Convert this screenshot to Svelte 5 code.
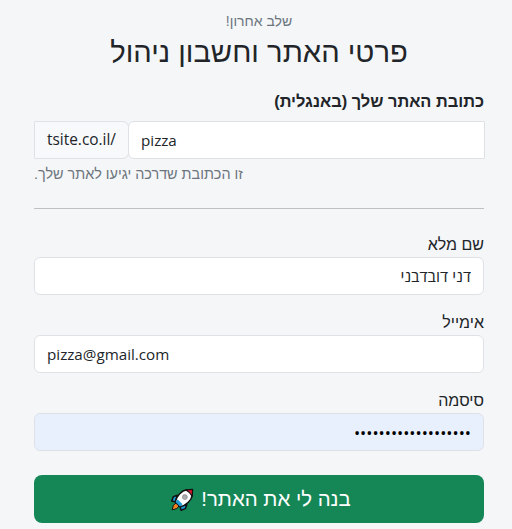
<script>
  var subtitle = "שלב אחרון!";
  var title = "פרטי האתר וחשבון ניהול";
  var address = "pizza";
  var fullName = "דני דובדבני";
  var email = "pizza@gmail.com";
  var password = "1234567890123456789";
</script>

<div class="page">
  <header class="head">
    <small>{subtitle}</small>
    <h1>{title}</h1>
  </header>

  <form onsubmit={e => e.preventDefault()}>
    <label class="strong" for="address">כתובת האתר שלך (באנגלית)</label>
    <div class="group" dir="ltr">
      <span class="addon">tsite.co.il/</span>
      <input id="address" class="control" type="text" value={address} />
    </div>
    <p class="help">זו הכתובת שדרכה יגיעו לאתר שלך.</p>

    <hr />

    <div class="field">
      <label for="name">שם מלא</label>
      <input id="name" class="control hebrew" type="text" value={fullName} />
    </div>
    <div class="field">
      <label for="email">אימייל</label>
      <input id="email" class="control" dir="ltr" type="email" value={email} />
    </div>
    <div class="field">
      <label for="password">סיסמה</label>
      <input id="password" class="control filled" type="password" value={password} />
    </div>

    <button type="submit">
      <span>בנה לי את האתר!</span>
      <svg class="rocket" viewBox="0 0 24 24" width="23" height="23" aria-hidden="true">
        <path d="M5.5 15.5 L2.5 18 L1.2 22.8 L6 21.5 L8.5 18.5 Z" fill="#f58220" stroke="#111" stroke-width="1" />
        <path d="M6.5 7.5 L2.5 9 L.8 13.5 L5 14.5 Z" fill="#1d9bd8" stroke="#111" stroke-width="1.6" stroke-linejoin="round" />
        <path d="M16.5 17.5 L15 21.5 L10.5 23.2 L9.5 19 Z" fill="#1d9bd8" stroke="#111" stroke-width="1.6" stroke-linejoin="round" />
        <path d="M4.5 14.5 C5.5 8.5 11 2.5 16.5 1.8 L22.2 1.8 L22.2 7.5 C21.5 13 15.5 18.5 9.5 19.5 Z" fill="#fff" stroke="#111" stroke-width="1.6" stroke-linejoin="round" />
        <path d="M15.5 2 L22.6 1.4 L22 8.5 C20.5 5.5 18.5 3.5 15.5 2 Z" fill="#e2142d" stroke="#111" stroke-width="1.2" stroke-linejoin="round" />
        <path d="M7 12 L12 17 L9.5 19.3 L4.7 14.5 Z" fill="#1d9bd8" />
        <circle cx="14.5" cy="9.5" r="2.6" fill="#a9adb0" stroke="#777" stroke-width=".6" />
      </svg>
    </button>
  </form>
</div>

<style>
  :global(body) {
    background: #f5f6f8;
    color: #212529;
    font-family: "Liberation Sans", Arial, sans-serif;
    font-size: 16px;
    line-height: 1.5;
  }

  .page {
    box-sizing: border-box;
    width: 512px;
    height: 529px;
    padding: 11px 28px 0 34px;
    overflow: hidden;
    direction: rtl;
  }

  .head {
    text-align: center;
    margin-bottom: 18px;
  }

  .head small {
    display: block;
    font-size: 14px;
    line-height: 21px;
    color: #6c757d;
    margin-bottom: 1px;
  }

  h1 {
    margin: 0;
    font-size: 29.2px;
    font-weight: 500;
    line-height: 38px;
  }

  form {
    display: flex;
    flex-direction: column;
  }

  label {
    display: block;
    line-height: 24px;
  }

  .strong {
    font-weight: 700;
    font-size: 16.4px;
    margin-bottom: 8px;
  }

  .group {
    display: flex;
    margin-right: -1px;
  }

  .addon {
    box-sizing: border-box;
    flex: none;
    width: 95px;
    height: 38px;
    padding: 6px 12px;
    background: #f8f9fa;
    border: 1px solid #dee2e6;
    border-radius: 0 6px 6px 0;
    white-space: nowrap;
    font-family: "Open Sans", "Liberation Sans", sans-serif;
    font-size: 15.4px;
  }

  .control {
    box-sizing: border-box;
    display: block;
    width: 100%;
    height: 38px;
    padding: 6px 12px;
    background: #fff;
    border: 1px solid #dee2e6;
    border-radius: 6px;
    color: #212529;
    font-family: "Open Sans", "Liberation Sans", sans-serif;
    font-size: 15.2px;
    line-height: 24px;
    outline: none;
  }

  .hebrew {
    font-size: 16px;
  }

  .group .control {
    flex: 1;
    min-width: 0;
    margin-left: -1px;
    border-radius: 6px 0 0 6px;
  }

  .filled {
    background: #e8f0fe;
    font-size: 16.4px;
    color: #000;
  }

  .help {
    margin: 5px 0 23px;
    font-size: 14.4px;
    line-height: 21px;
    color: #6c757d;
    text-align: left;
  }

  hr {
    width: 100%;
    margin: 0 0 24px;
    border: 0;
    border-top: 1px solid #bfc0c2;
  }

  .field {
    margin-bottom: 16px;
  }

  .field:last-of-type {
    margin-bottom: 24px;
  }

  button {
    display: flex;
    align-items: center;
    justify-content: center;
    gap: 7px;
    height: 48px;
    padding: 0 0 0 4px;
    background: #158757;
    border: 0;
    border-radius: 8px;
    color: #fff;
    font-family: inherit;
    font-size: 20.4px;
  }

  .rocket {
    flex: none;
  }
</style>
